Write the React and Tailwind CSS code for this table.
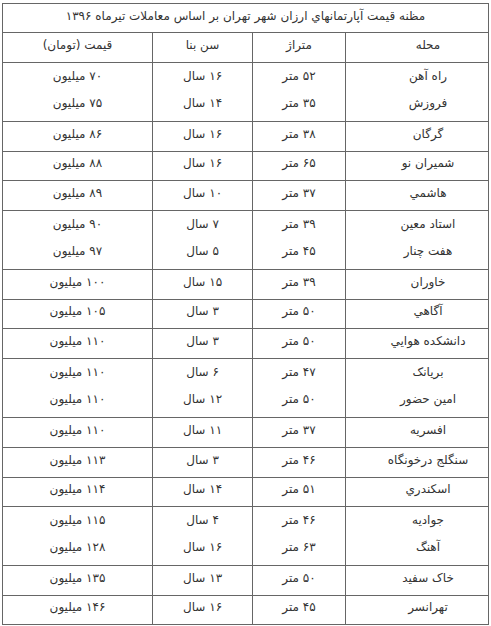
import React from 'react';

const rows = [
  { h: 'h-[59px]', items: [['راه آهن', '۵۲ متر', '۱۶ سال', '۷۰ میلیون'], ['فروزش', '۳۵ متر', '۱۴ سال', '۷۵ میلیون']] },
  { h: 'h-[30px]', items: [['گرگان', '۳۸ متر', '۱۶ سال', '۸۶ میلیون']] },
  { h: 'h-[29px]', items: [['شمیران نو', '۶۵ متر', '۱۶ سال', '۸۸ میلیون']] },
  { h: 'h-[30px]', items: [['هاشمي', '۳۷ متر', '۱۰ سال', '۸۹ میلیون']] },
  { h: 'h-[59px]', items: [['استاد معین', '۳۹ متر', '۷ سال', '۹۰ میلیون'], ['هفت چنار', '۴۵ متر', '۵ سال', '۹۷ میلیون']] },
  { h: 'h-[30px]', items: [['خاوران', '۳۹ متر', '۱۵ سال', '۱۰۰ میلیون']] },
  { h: 'h-[29px]', items: [['آگاهي', '۵۰ متر', '۳ سال', '۱۰۵ میلیون']] },
  { h: 'h-[30px]', items: [['دانشکده هوايي', '۵۰ متر', '۳ سال', '۱۱۰ میلیون']] },
  { h: 'h-[59px]', items: [['بریانک', '۴۷ متر', '۶ سال', '۱۱۰ میلیون'], ['امین حضور', '۵۰ متر', '۱۲ سال', '۱۱۰ میلیون']] },
  { h: 'h-[30px]', items: [['افسریه', '۳۷ متر', '۱۱ سال', '۱۱۰ میلیون']] },
  { h: 'h-[30px]', items: [['سنگلج درخونگاه', '۴۶ متر', '۳ سال', '۱۱۳ میلیون']] },
  { h: 'h-[29px]', items: [['اسکندري', '۵۱ متر', '۱۴ سال', '۱۱۴ میلیون']] },
  { h: 'h-[59px]', items: [['جوادیه', '۴۶ متر', '۴ سال', '۱۱۵ میلیون'], ['آهنگ', '۶۳ متر', '۱۶ سال', '۱۲۸ میلیون']] },
  { h: 'h-[30px]', items: [['خاک سفید', '۵۰ متر', '۱۳ سال', '۱۳۵ میلیون']] },
  { h: 'h-[28px]', items: [['تهرانسر', '۴۵ متر', '۱۶ سال', '۱۴۶ میلیون']], last: true },
];

// column widths, right to left
const cols = ['w-[143px] pl-[22px]', 'w-[93px]', 'w-[100px]', 'flex-1'];

const Cell = ({ className, lines }) => (
  <div className={`${className} flex flex-col items-center justify-center pb-[5px] leading-[27px] border-l border-[#666] last:border-l-0`}>
    {lines.map((t, i) => (
      <span key={i}>{t}</span>
    ))}
  </div>
);

export default function App() {
  return (
    <div className="bg-white w-[491px] h-[626px] pt-[3px] pl-[2px]">
      <div
        dir="rtl"
        className="w-[487px] border border-[#666] text-[12px] text-[#333]"
        style={{ fontFamily: '"DejaVu Sans", sans-serif' }}
      >
        <div className="h-[29px] flex items-center justify-center pb-[4px] border-b border-[#666]">
          مظنه قیمت آپارتمانهاي ارزان شهر تهران بر اساس معاملات تیرماه ۱۳۹۶
        </div>
        <div className="h-[30px] flex border-b border-[#666]">
          <Cell className={cols[0]} lines={['محله']} />
          <Cell className={cols[1]} lines={['متراژ']} />
          <Cell className={cols[2]} lines={['سن بنا']} />
          <Cell className={cols[3]} lines={['قیمت (تومان)']} />
        </div>
        {rows.map((r, i) => (
          <div key={i} className={`${r.h} flex ${r.last ? '' : 'border-b border-[#666]'}`}>
            {[0, 1, 2, 3].map((c) => (
              <Cell key={c} className={cols[c]} lines={r.items.map((it) => it[c])} />
            ))}
          </div>
        ))}
      </div>
    </div>
  );
}
